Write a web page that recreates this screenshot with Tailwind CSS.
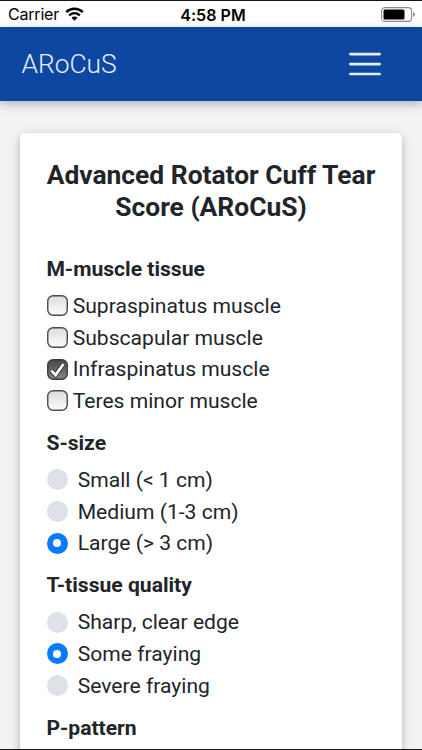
<!DOCTYPE html>
<html lang="en">
<head>
  <meta charset="UTF-8">
  <meta name="viewport" content="width=device-width, initial-scale=1.0">
  <title>ARoCuS</title>
  <script src="https://cdn.jsdelivr.net/npm/@tailwindcss/browser@4"></script>
</head>
<body class="bg-[#f3f3f3] font-['Roboto',sans-serif] text-[#212529]">
  <div class="flex h-[750px] w-[422px] flex-col overflow-hidden border-y border-[#151518]">
    <!-- status bar -->
    <div class="grid h-[26px] shrink-0 grid-cols-[1fr_auto_1fr] items-center bg-white pr-[7px] pl-2 font-['Inter',sans-serif] text-[16px] leading-none text-black">
      <div class="flex items-center gap-[6px]">
        <span class="tracking-[-0.2px]">Carrier</span>
        <svg class="h-[14px] w-[19px]" viewBox="0 0 19 14">
          <path d="M1.2 5.2C6 .7 13 .7 17.8 5.2" fill="none" stroke="#000" stroke-width="2.5"/>
          <path d="M4.2 8.4C7.3 5.6 11.7 5.6 14.8 8.4" fill="none" stroke="#000" stroke-width="2.4"/>
          <path d="M6.5 10.7C8.3 9.1 10.7 9.1 12.5 10.7L9.5 13.7Z"/>
        </svg>
      </div>
      <span class="pt-px pl-[3px] font-semibold tracking-[0.05px] whitespace-nowrap">4:58 PM</span>
      <svg class="h-[15px] w-[34px] justify-self-end" viewBox="0 0 34 15">
        <rect x=".6" y=".6" width="30" height="13.8" rx="3.5" fill="#fff" stroke="#8b8b8b" stroke-width="1.1"/>
        <rect x="2.5" y="2.5" width="21" height="10" rx="1.5"/>
        <path d="M32.2 5Q34 5.7 34 7.5T32.2 10Z" fill="#8b8b8b"/>
      </svg>
    </div>

    <nav class="z-10 flex h-[74px] shrink-0 items-center justify-between bg-[#0d47a1] pr-[41px] pl-[21.4px] shadow-[0_3px_7px_rgba(0,0,0,0.16),0_3px_13px_rgba(0,0,0,0.12)]">
      <span class="pt-[2px] text-[26.4px] font-light text-[#e8f0fb]">ARoCuS</span>
      <button class="w-8" aria-label="Menu">
        <svg class="h-6 w-8" viewBox="0 0 32 24" stroke="#e4effc" stroke-width="2.6" stroke-linecap="round">
          <path d="M1.3 2.1H30.7M1.3 12.1H30.7M1.3 22H30.7"/>
        </svg>
      </button>
    </nav>

    <main class="mx-5 mt-8 h-[900px] shrink-0 rounded-[5px] bg-white px-[26.4px] pt-[27px] text-[21.1px] leading-[31.65px] shadow-[0_3px_7px_rgba(0,0,0,0.16),0_3px_13px_rgba(0,0,0,0.12)]">
      <h1 class="mb-[29.6px] text-center text-[26.4px] font-bold whitespace-nowrap">Advanced Rotator Cuff Tear<br>Score (ARoCuS)</h1>
      <form id="score-form"></form>
    </main>
  </div>

  <script>
    const groups = [
      { title: 'M-muscle tissue', type: 'checkbox', options: ['Supraspinatus muscle', 'Subscapular muscle', 'Infraspinatus muscle', 'Teres minor muscle'], selected: 2 },
      { title: 'S-size', type: 'radio', options: ['Small (< 1 cm)', 'Medium (1-3 cm)', 'Large (> 3 cm)'], selected: 2 },
      { title: 'T-tissue quality', type: 'radio', options: ['Sharp, clear edge', 'Some fraying', 'Severe fraying'], selected: 1 },
      { title: 'P-pattern', type: 'radio', options: [], selected: -1 }
    ];

    const boxOff = '<svg class="size-[21px] shrink-0" viewBox="0 0 21 21"><rect x=".75" y=".75" width="19.5" height="19.5" rx="5.5" fill="url(#off)" stroke="#4c4c4c" stroke-width="1.4"/></svg>';
    const boxOn = `<svg class="size-[21px] shrink-0" viewBox="0 0 21 21">
      <rect x=".75" y=".75" width="19.5" height="19.5" rx="5.5" fill="url(#on)" stroke="#3a3a3a" stroke-width="1.4"/>
      <path d="M4.4 11.6L8.6 16L16.4 5" fill="none" stroke="#2b2b2b" stroke-width="4.6"/>
      <path d="M4.4 11.6L8.6 16L16.4 5" fill="none" stroke="#fff" stroke-width="2.8"/>
    </svg>`;
    const radioOff = '<span class="size-[21px] shrink-0 rounded-full bg-[#dee2e6]"></span>';
    const radioOn = '<span class="flex size-[21px] shrink-0 items-center justify-center rounded-full bg-[#087bff]"><span class="size-2 rounded-full bg-white"></span></span>';

    function renderGroup(group) {
      const section = document.createElement('section');
      section.className = 'mb-[10.5px]';
      const heading = document.createElement('h2');
      heading.className = 'mb-[5.3px] font-bold';
      heading.textContent = group.title;
      section.appendChild(heading);
      group.options.forEach((option, i) => {
        const label = document.createElement('label');
        const on = i === group.selected;
        if (group.type === 'checkbox') {
          label.className = 'flex items-center gap-[5px] pl-[0.3px]';
          label.innerHTML = on ? boxOn : boxOff;
        } else {
          label.className = 'flex items-center gap-[10px] pl-[0.3px]';
          label.innerHTML = on ? radioOn : radioOff;
        }
        const text = document.createElement('span');
        text.textContent = option;
        label.appendChild(text);
        section.appendChild(label);
      });
      return section;
    }

    const form = document.getElementById('score-form');
    groups.forEach(group => form.appendChild(renderGroup(group)));
  </script>

  <!-- checkbox gradients -->
  <svg class="absolute size-0">
    <linearGradient id="off" x2="0" y2="1"><stop stop-color="#dcdcdc"/><stop offset="1" stop-color="#fbfbfb"/></linearGradient>
    <linearGradient id="on" x2="0" y2="1"><stop stop-color="#484848"/><stop offset="1" stop-color="#858585"/></linearGradient>
  </svg>
</body>
</html>
